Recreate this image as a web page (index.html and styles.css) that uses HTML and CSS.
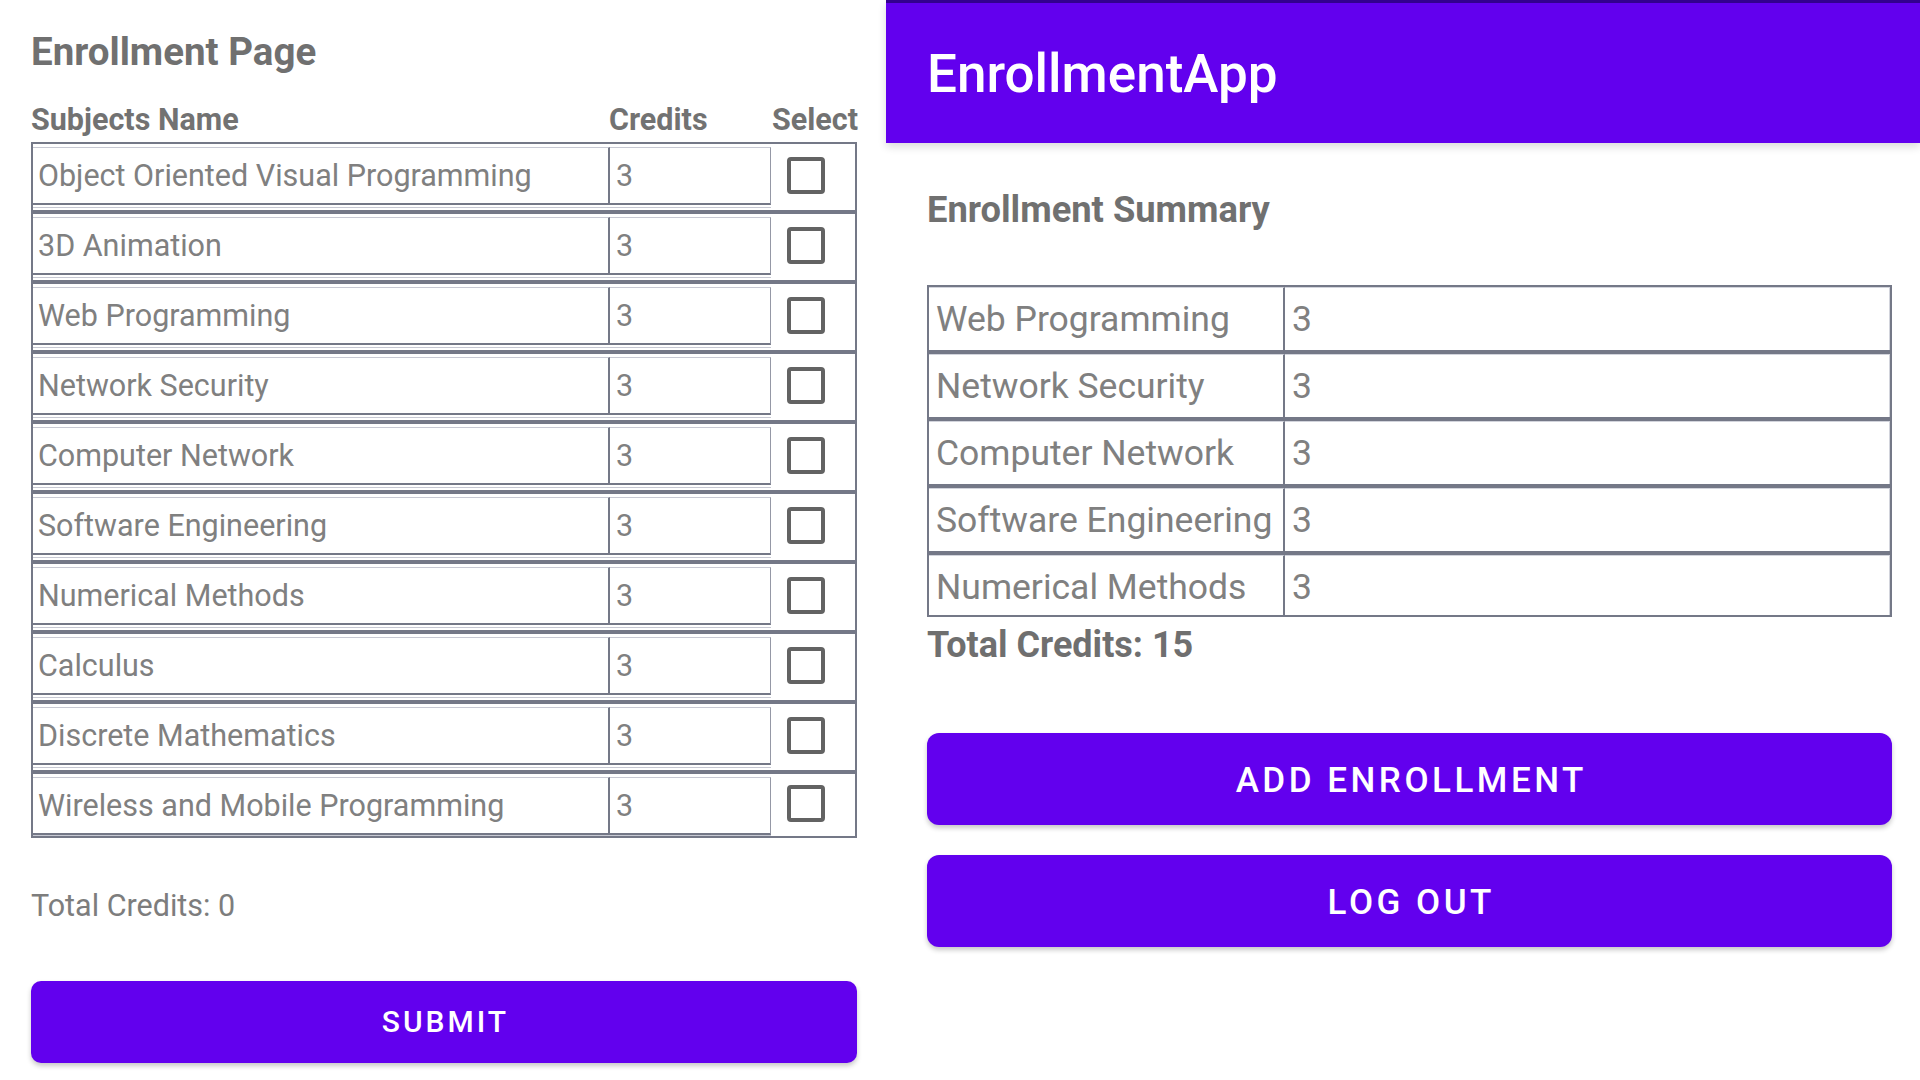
FILE: index.html
```html
<!DOCTYPE html>
<html>

<head>
    <title>EnrollmentApp</title>
    <link rel="stylesheet" href="styles.css">
</head>

<body>
    <!-- Enrollment page -->
    <div class="enroll-page">
        <h1 class="page-title">Enrollment Page</h1>

        <div class="table-head">
            <div class="col-name">Subjects Name</div>
            <div class="col-credits">Credits</div>
            <div class="col-select">Select</div>
        </div>

        <div class="subject-table">
            <div class="subject-row">
                <div class="cell-group">
                    <div class="cell cell-name">Object Oriented Visual Programming</div>
                    <div class="cell cell-credits">3</div>
                </div>
                <div class="select-cell"><span class="checkbox"></span></div>
            </div>
            <div class="subject-row">
                <div class="cell-group">
                    <div class="cell cell-name">3D Animation</div>
                    <div class="cell cell-credits">3</div>
                </div>
                <div class="select-cell"><span class="checkbox"></span></div>
            </div>
            <div class="subject-row">
                <div class="cell-group">
                    <div class="cell cell-name">Web Programming</div>
                    <div class="cell cell-credits">3</div>
                </div>
                <div class="select-cell"><span class="checkbox"></span></div>
            </div>
            <div class="subject-row">
                <div class="cell-group">
                    <div class="cell cell-name">Network Security</div>
                    <div class="cell cell-credits">3</div>
                </div>
                <div class="select-cell"><span class="checkbox"></span></div>
            </div>
            <div class="subject-row">
                <div class="cell-group">
                    <div class="cell cell-name">Computer Network</div>
                    <div class="cell cell-credits">3</div>
                </div>
                <div class="select-cell"><span class="checkbox"></span></div>
            </div>
            <div class="subject-row">
                <div class="cell-group">
                    <div class="cell cell-name">Software Engineering</div>
                    <div class="cell cell-credits">3</div>
                </div>
                <div class="select-cell"><span class="checkbox"></span></div>
            </div>
            <div class="subject-row">
                <div class="cell-group">
                    <div class="cell cell-name">Numerical Methods</div>
                    <div class="cell cell-credits">3</div>
                </div>
                <div class="select-cell"><span class="checkbox"></span></div>
            </div>
            <div class="subject-row">
                <div class="cell-group">
                    <div class="cell cell-name">Calculus</div>
                    <div class="cell cell-credits">3</div>
                </div>
                <div class="select-cell"><span class="checkbox"></span></div>
            </div>
            <div class="subject-row">
                <div class="cell-group">
                    <div class="cell cell-name">Discrete Mathematics</div>
                    <div class="cell cell-credits">3</div>
                </div>
                <div class="select-cell"><span class="checkbox"></span></div>
            </div>
            <div class="subject-row">
                <div class="cell-group">
                    <div class="cell cell-name">Wireless and Mobile Programming</div>
                    <div class="cell cell-credits">3</div>
                </div>
                <div class="select-cell"><span class="checkbox"></span></div>
            </div>
        </div>

        <div class="total-left">Total Credits: 0</div>

        <button type="button" class="btn btn-submit">SUBMIT</button>
    </div>

    <!-- Summary page -->
    <div class="summary-page">
        <div class="app-bar">EnrollmentApp</div>

        <div class="summary-content">
            <h2 class="summary-title">Enrollment Summary</h2>

            <div class="summary-table">
                <div class="summary-row">
                    <div class="summary-cell summary-name">Web Programming</div>
                    <div class="summary-cell summary-credits">3</div>
                </div>
                <div class="summary-row">
                    <div class="summary-cell summary-name">Network Security</div>
                    <div class="summary-cell summary-credits">3</div>
                </div>
                <div class="summary-row">
                    <div class="summary-cell summary-name">Computer Network</div>
                    <div class="summary-cell summary-credits">3</div>
                </div>
                <div class="summary-row">
                    <div class="summary-cell summary-name">Software Engineering</div>
                    <div class="summary-cell summary-credits">3</div>
                </div>
                <div class="summary-row">
                    <div class="summary-cell summary-name">Numerical Methods</div>
                    <div class="summary-cell summary-credits">3</div>
                </div>
            </div>

            <div class="summary-total">Total Credits: 15</div>

            <button type="button" class="btn btn-lg btn-add">ADD ENROLLMENT</button>
            <button type="button" class="btn btn-lg">LOG OUT</button>
        </div>
    </div>
</body>

</html>
```

FILE: styles.css
```css
body {
    margin: 0;
    font-family: Roboto, "Noto Sans", sans-serif;
    background-color: #ffffff;
    display: flex;
    height: 1080px;
    overflow: hidden;
}

/* Left screen */
.enroll-page {
    width: 880px;
    box-sizing: border-box;
    padding: 33px 23px 0 31px;
}

.page-title {
    margin: 0 0 34px;
    font-size: 38.5px;
    line-height: 38px;
    font-weight: 700;
    color: #707070;
}

.table-head {
    display: flex;
    height: 30px;
    margin-bottom: 7px;
    font-size: 30.5px;
    line-height: 30px;
    font-weight: 700;
    color: #727272;
}

.col-name {
    width: 578px;
}

.col-credits {
    width: 163px;
}

.col-select {
    width: 85px;
}

.subject-row {
    display: flex;
    height: 70px;
    box-sizing: border-box;
    border: 2px solid #747887;
}

.subject-row:last-child {
    height: 65.5px;
}

.cell-group {
    display: flex;
    width: 738px;
    margin: 3px 0 2px;
    padding-bottom: 2px;
    border-bottom: 1px solid #c7c9d3;
}

.subject-row:last-child .cell-group {
    margin-bottom: 0;
    padding-bottom: 0;
}

.cell {
    box-sizing: border-box;
    height: 57.5px;
    display: flex;
    align-items: center;
    border-top: 1px solid #c7c9d3;
    border-bottom: 2px solid #747887;
    font-size: 30.5px;
    color: #808080;
    white-space: nowrap;
}

.cell-name {
    width: 577px;
    padding-left: 5px;
    border-right: 2px solid #747887;
}

.cell-credits {
    width: 161px;
    padding-left: 6px;
    border-right: 1px solid #9598a6;
}

.select-cell {
    flex: 1;
    display: flex;
    align-items: center;
    padding-left: 16px;
    padding-bottom: 3px;
}

.checkbox {
    width: 38px;
    height: 37px;
    box-sizing: border-box;
    border: 4px solid #636363;
    border-radius: 4px;
}

.total-left {
    margin-top: 53px;
    font-size: 30.5px;
    line-height: 30px;
    color: #7d7d7d;
}

/* Buttons */
.btn {
    display: block;
    width: 100%;
    border: none;
    background-color: #6200ee;
    color: #ffffff;
    font-family: inherit;
    font-weight: 500;
    cursor: pointer;
    box-shadow: 0 3px 5px rgba(0, 0, 0, 0.22);
}

.btn-submit {
    margin-top: 60px;
    height: 82px;
    border-radius: 10px;
    font-size: 30px;
    letter-spacing: 3px;
    text-indent: 3px;
}

.btn-lg {
    margin-top: 30px;
    height: 92px;
    padding-top: 4px;
    border-radius: 12px;
    font-size: 35px;
    letter-spacing: 3.5px;
    text-indent: 3.5px;
}

.btn-lg.btn-add {
    margin-top: 70.5px;
}

/* Right screen */
.summary-page {
    flex: 1;
    margin-left: 6px;
    display: flex;
    flex-direction: column;
}

.app-bar {
    height: 143px;
    box-sizing: border-box;
    border-top: 3px solid #33008f;
    background-color: #6200ee;
    display: flex;
    align-items: center;
    padding-left: 41px;
    padding-top: 2px;
    font-size: 53px;
    font-weight: 500;
    color: #ffffff;
    box-shadow: 0 4px 8px rgba(0, 0, 0, 0.14);
}

.summary-content {
    padding: 0 28px 0 41px;
}

.summary-title {
    margin: 50px 0 0;
    font-size: 36.3px;
    line-height: 34px;
    font-weight: 700;
    color: #707070;
}

.summary-table {
    margin-top: 58px;
}

.summary-row {
    display: flex;
    height: 67px;
    box-sizing: border-box;
    border: 2px solid #747887;
}

.summary-row:last-child {
    height: 64px;
}

.summary-row:last-child .summary-cell {
    padding-top: 3px;
}

.summary-cell {
    box-sizing: border-box;
    display: flex;
    align-items: center;
    padding-left: 7px;
    border-top: 1px solid #d2d4dc;
    font-size: 35.5px;
    color: #808080;
    white-space: nowrap;
}

.summary-name {
    width: 356px;
    border-right: 2px solid #747887;
}

.summary-credits {
    flex: 1;
    border-right: 1px solid #d2d4dc;
}

.summary-total {
    margin-top: 10.5px;
    font-size: 36px;
    line-height: 35px;
    font-weight: 700;
    color: #6f6f6f;
}
```
